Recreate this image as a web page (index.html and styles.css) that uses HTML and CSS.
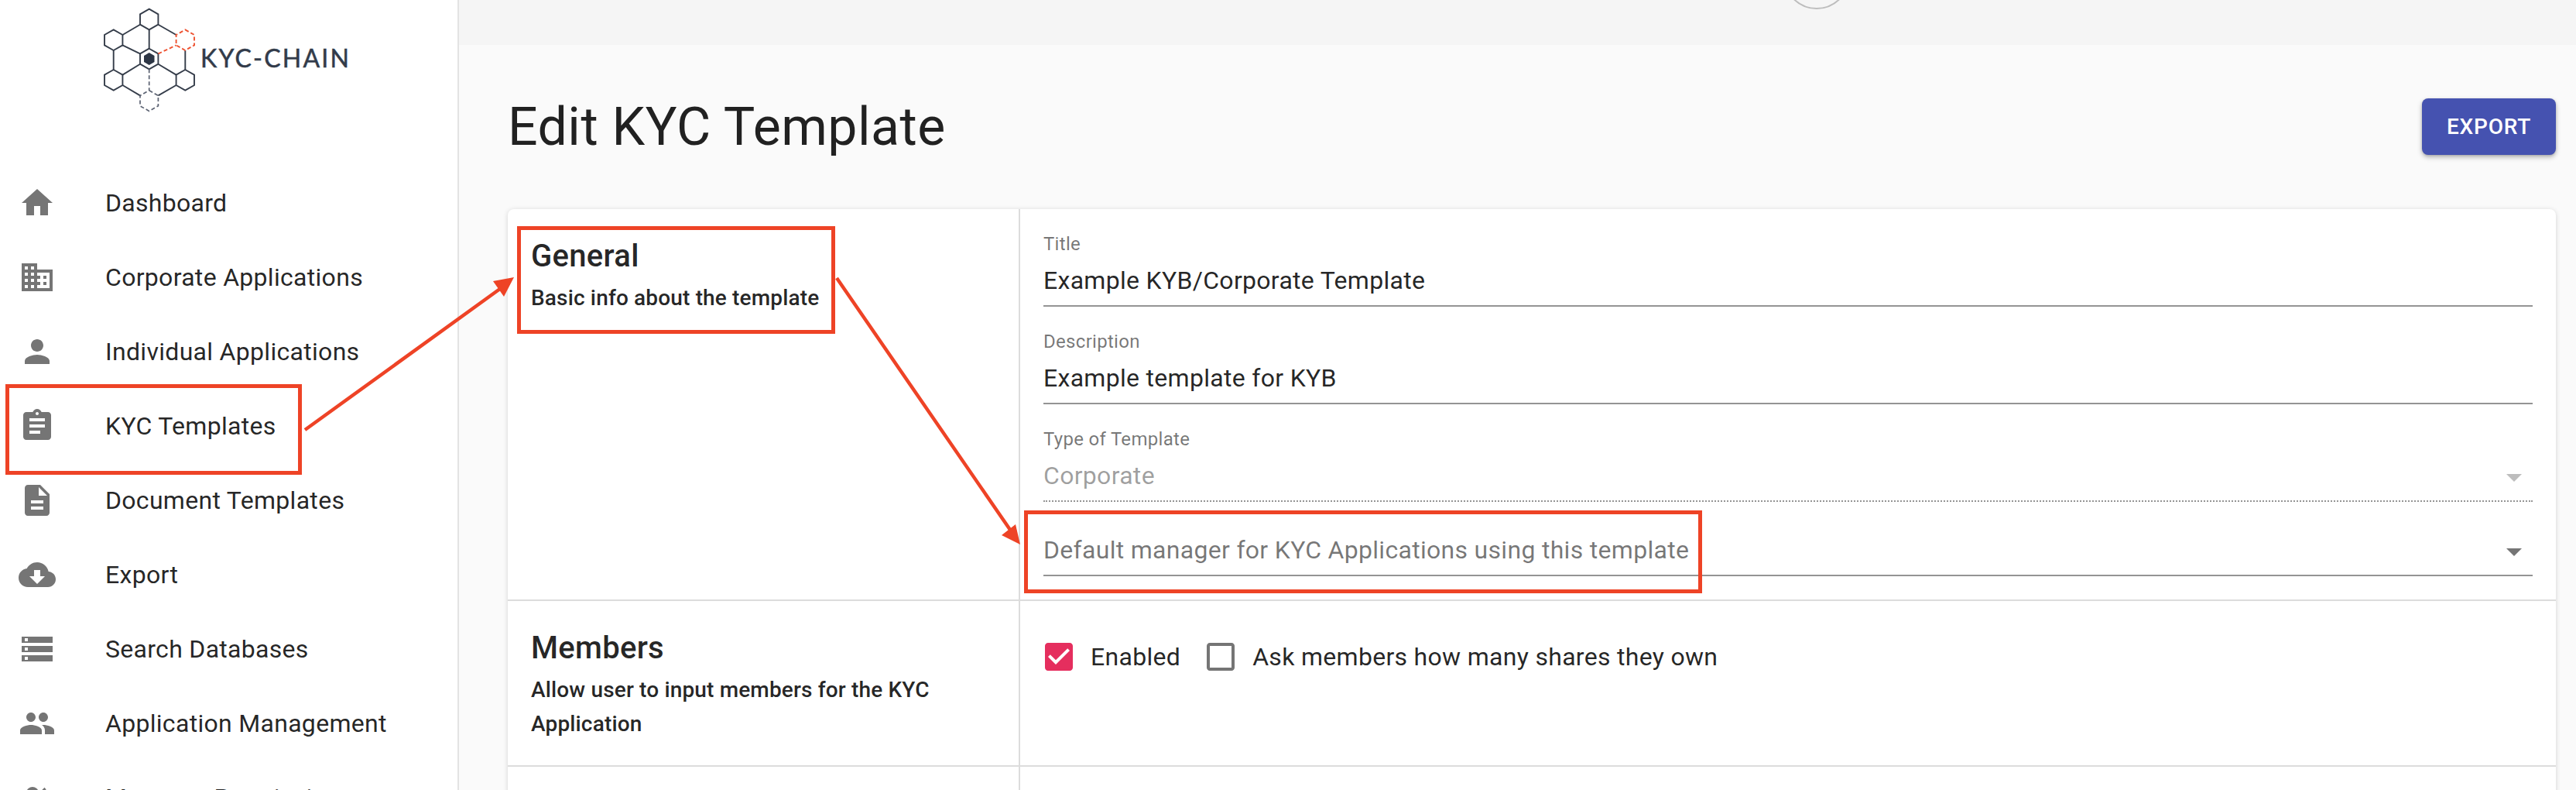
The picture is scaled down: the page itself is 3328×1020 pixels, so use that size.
FILE: index.html
```html
<!DOCTYPE html>
<html lang="en">
<head>
<meta charset="utf-8">
<title>Edit KYC Template</title>
<link rel="stylesheet" href="styles.css">
</head>
<body>
<div class="app">
  <aside class="sidebar">
    <div class="logo">
      <svg class="logo-svg" viewBox="120 0 340 150" width="340" height="150">
        <g class="logo-lines">
          <polygon points="192.7,11.7 204.4,18.3 204.4,31.7 192.7,38.3 181,31.7 181,18.3"/>
          <polygon points="146.7,38.4 158.4,45 158.4,58.4 146.7,65 135,58.4 135,45"/>
          <polygon points="146.7,90 158.4,96.6 158.4,110 146.7,116.6 135,110 135,96.6"/>
          <polygon points="239.3,90 251,96.6 251,110 239.3,116.6 227.6,110 227.6,96.6"/>
          <polygon points="192.7,62.7 204.4,69.4 204.4,82.7 192.7,89.3 181,82.7 181,69.4"/>
          <path d="M204.4 31.7L227.6 45M181 31.7L158.4 45M192.7 38.3V62.7M146.7 65V90M158.4 58.4L181 69.4M239.3 65V90M181 82.7L158.4 96.6M204.4 82.7L227.6 96.6M158.4 110L181 123.4M227.6 110L204.4 123.4"/>
        </g>
        <polygon class="logo-core" points="192.7,68 199.5,72 199.5,80 192.7,84 186,80 186,72"/>
        <g class="logo-red">
          <polygon points="239.3,38.4 251,45 251,58.4 239.3,65 227.6,58.4 227.6,45"/>
          <path d="M204.4 69.4L227.6 58.4"/>
        </g>
        <g class="logo-gray">
          <polygon points="192.7,116.7 204.4,123.4 204.4,136.8 192.7,143.4 181,136.8 181,123.4"/>
          <path d="M192.7 89.3V116.7"/>
        </g>
        <text class="logo-text" x="259" y="87" textLength="192" lengthAdjust="spacing">KYC-CHAIN</text>
      </svg>
    </div>
    <nav class="nav">
      <a class="nav-item"><svg class="icon" viewBox="0 0 24 24"><path d="M10 20v-6h4v6h5v-8h3L12 3 2 12h3v8z"/></svg><span>Dashboard</span></a>
      <a class="nav-item"><svg class="icon" viewBox="0 0 24 24"><path d="M12 7V3H2v18h20V7H12zM6 19H4v-2h2v2zm0-4H4v-2h2v2zm0-4H4V9h2v2zm0-4H4V5h2v2zm4 12H8v-2h2v2zm0-4H8v-2h2v2zm0-4H8V9h2v2zm0-4H8V5h2v2zm10 12h-8v-2h2v-2h-2v-2h2v-2h-2V9h8v10zm-2-8h-2v2h2v-2zm0 4h-2v2h2v-2z"/></svg><span>Corporate Applications</span></a>
      <a class="nav-item"><svg class="icon" viewBox="0 0 24 24"><path d="M12 12c2.21 0 4-1.79 4-4s-1.79-4-4-4-4 1.79-4 4 1.79 4 4 4zm0 2c-2.67 0-8 1.34-8 4v2h16v-2c0-2.66-5.33-4-8-4z"/></svg><span>Individual Applications</span></a>
      <a class="nav-item"><svg class="icon" viewBox="0 0 24 24"><path d="M19 3h-4.18C14.4 1.84 13.3 1 12 1c-1.3 0-2.4.84-2.82 2H5c-1.1 0-2 .9-2 2v14c0 1.1.9 2 2 2h14c1.1 0 2-.9 2-2V5c0-1.1-.9-2-2-2zm-7 0c.55 0 1 .45 1 1s-.45 1-1 1-1-.45-1-1 .45-1 1-1zm2 14H7v-2h7v2zm3-4H7v-2h10v2zm0-4H7V7h10v2z"/></svg><span>KYC Templates</span></a>
      <a class="nav-item"><svg class="icon" viewBox="0 0 24 24"><path d="M14 2H6c-1.1 0-1.99.9-1.99 2L4 20c0 1.1.89 2 1.99 2H18c1.1 0 2-.9 2-2V8l-6-6zm2 16H8v-2h8v2zm0-4H8v-2h8v2zm-3-5V3.5L18.5 9H13z"/></svg><span>Document Templates</span></a>
      <a class="nav-item"><svg class="icon" viewBox="0 0 24 24"><path d="M19.35 10.04C18.67 6.59 15.64 4 12 4 9.11 4 6.6 5.64 5.35 8.04 2.34 8.36 0 10.91 0 14c0 3.31 2.69 6 6 6h13c2.76 0 5-2.24 5-5 0-2.64-2.05-4.78-4.65-4.96zM17 13l-5 5-5-5h3V9h4v4h3z"/></svg><span>Export</span></a>
      <a class="nav-item"><svg class="icon" viewBox="0 0 24 24"><path d="M2 20h20v-4H2v4zm2-3h2v2H4v-2zM2 4v4h20V4H2zm4 3H4V5h2v2zm-4 7h20v-4H2v4zm2-3h2v2H4v-2z"/></svg><span>Search Databases</span></a>
      <a class="nav-item"><svg class="icon" viewBox="0 0 24 24"><path d="M16 11c1.66 0 2.99-1.34 2.99-3S17.66 5 16 5c-1.66 0-3 1.34-3 3s1.34 3 3 3zm-8 0c1.66 0 2.99-1.34 2.99-3S9.66 5 8 5C6.34 5 5 6.34 5 8s1.34 3 3 3zm0 2c-2.33 0-7 1.17-7 3.5V19h14v-2.5c0-2.33-4.67-3.5-7-3.5zm8 0c-.29 0-.62.02-.97.05 1.16.84 1.97 1.97 1.97 3.45V19h6v-2.5c0-2.33-4.67-3.5-7-3.5z"/></svg><span>Application Management</span></a>
      <a class="nav-item"><svg class="icon" viewBox="0 0 24 24"><path d="M5 9a4 4 0 1 0 8 0a4 4 0 1 0-8 0zM9 15c-2.67 0-8 1.34-8 4v2h16v-2c0-2.66-5.33-4-8-4zm7.76-9.64l-1.68 1.69c.84 1.18.84 2.71 0 3.89l1.68 1.69c2.02-2.02 2.02-5.07 0-7.27z"/></svg><span>Message Permissions</span></a>
    </nav>
  </aside>
  <main class="main">
    <div class="topbar"><div class="avatar"></div></div>
    <div class="content">
      <header class="page-head">
        <h1 class="page-title">Edit KYC Template</h1>
        <button class="btn-export">EXPORT</button>
      </header>
      <section class="card">
        <div class="row">
          <div class="row-info">
            <h2 class="row-title">General</h2>
            <p class="row-desc">Basic info about the template</p>
          </div>
          <div class="row-body fields">
            <div class="field">
              <label class="field-label">Title</label>
              <div class="field-value">Example KYB/Corporate Template</div>
            </div>
            <div class="field">
              <label class="field-label">Description</label>
              <div class="field-value">Example template for KYB</div>
            </div>
            <div class="field">
              <label class="field-label">Type of Template</label>
              <div class="field-value is-disabled">Corporate
                <svg class="arrow arrow-disabled" viewBox="0 0 24 24"><path d="M7 10l5 5 5-5z"/></svg>
              </div>
            </div>
            <div class="field field-nolabel">
              <div class="field-value is-placeholder">Default manager for KYC Applications using this template
                <svg class="arrow" viewBox="0 0 24 24"><path d="M7 10l5 5 5-5z"/></svg>
              </div>
            </div>
          </div>
        </div>
        <div class="row">
          <div class="row-info">
            <h2 class="row-title">Members</h2>
            <p class="row-desc">Allow user to input members for the KYC Application</p>
          </div>
          <div class="row-body checks">
            <label class="check">
              <svg class="check-box is-on" viewBox="0 0 24 24"><path d="M19 3H5c-1.11 0-2 .9-2 2v14c0 1.1.89 2 2 2h14c1.11 0 2-.9 2-2V5c0-1.1-.89-2-2-2zm-9 14l-5-5 1.41-1.41L10 14.17l7.59-7.59L19 8l-9 9z"/></svg>
              <span>Enabled</span>
            </label>
            <label class="check">
              <svg class="check-box" viewBox="0 0 24 24"><path d="M19 5v14H5V5h14m0-2H5c-1.1 0-2 .9-2 2v14c0 1.1.9 2 2 2h14c1.1 0 2-.9 2-2V5c0-1.1-.9-2-2-2z"/></svg>
              <span>Ask members how many shares they own</span>
            </label>
          </div>
        </div>
        <div class="row row-empty">
          <div class="row-info"></div>
          <div class="row-body"></div>
        </div>
      </section>
    </div>
  </main>
</div>
<svg class="annotations" viewBox="0 0 3328 1020" width="3328" height="1020">
  <rect x="9.5" y="498.5" width="378" height="112"/>
  <rect x="670.5" y="294.5" width="406" height="134"/>
  <rect x="1325.5" y="661.5" width="871" height="102"/>
  <path d="M394 555L650 370M1081 359L1305 684"/>
  <polygon class="head" points="664,358 637,363 651,383"/>
  <polygon class="head" points="1318,703 1294,691 1312,677"/>
</svg>
</body>
</html>
```

FILE: styles.css
```css
* { box-sizing: border-box; }
html, body { margin: 0; height: 1020px; overflow: hidden; }
body {
  position: relative;
  background: #fafafa;
  font-family: Roboto, "Liberation Sans", sans-serif;
  color: rgba(0, 0, 0, 0.87);
}
.app { display: flex; height: 1020px; overflow: hidden; }

.sidebar {
  flex: none;
  width: 593px;
  background: #fff;
  border-right: 2px solid #e3e3e3;
}
.logo { height: 214px; padding-left: 120px; }
.logo-svg { display: block; }
.logo-lines { fill: none; stroke: #353d4a; stroke-width: 1.9; }
.logo-core { fill: #2d3645; }
.logo-red { fill: none; stroke: #ee5231; stroke-width: 1.9; stroke-dasharray: 5 3; }
.logo-gray { fill: none; stroke: #5b6272; stroke-width: 1.7; stroke-dasharray: 5 3; }
.logo-text { font-family: Lato, sans-serif; font-size: 32px; fill: #323b4a; stroke: #323b4a; stroke-width: 0.5; }

.nav { display: flex; flex-direction: column; }
.nav-item {
  display: flex;
  align-items: center;
  flex: none;
  height: 96px;
  padding-left: 24px;
  font-size: 32px;
  letter-spacing: 0.3px;
}
.icon { flex: none; width: 48px; height: 48px; margin-right: 64px; fill: #757575; }

.main { flex: 1; min-width: 0; display: flex; flex-direction: column; }
.topbar {
  flex: none;
  height: 58px;
  background: #f5f5f5;
  display: flex;
  justify-content: flex-end;
  align-items: flex-end;
  padding: 0 938px 46px 0;
  overflow: hidden;
}
.avatar {
  flex: none;
  width: 86px;
  height: 86px;
  border-radius: 50%;
  border: 2px solid #bdbdbd;
}
.content { flex: 1; padding: 69px 26px 0 63px; }
.page-head {
  display: flex;
  justify-content: space-between;
  align-items: center;
  height: 73px;
  margin-bottom: 70px;
}
.page-title { margin: 0; font-size: 68px; font-weight: 400; letter-spacing: 0.5px; }
.btn-export {
  width: 173px;
  height: 73px;
  border: 0;
  border-radius: 8px;
  background: #4552b0;
  color: #fff;
  font-family: inherit;
  font-size: 28px;
  font-weight: 500;
  letter-spacing: 0.8px;
  box-shadow: 0 3px 6px rgba(0, 0, 0, 0.28), 0 1px 3px rgba(0, 0, 0, 0.12);
}

.card {
  background: #fff;
  border-radius: 8px 8px 0 0;
  box-shadow: 0 1px 6px rgba(0, 0, 0, 0.16);
}
.row {
  display: grid;
  grid-template-columns: 660px 1fr;
  border-bottom: 2px solid #dcdcdc;
}
.row-empty { height: 100px; border-bottom: 0; }
.row-info { padding: 29px 30px 31px 30px; }
.row-body { border-left: 2px solid #dcdcdc; padding: 0 30px; }
.row-title { margin: 0; font-size: 40px; font-weight: 500; line-height: 64px; letter-spacing: 0.3px; }
.row-desc { margin: 0; font-size: 28px; font-weight: 500; line-height: 44px; letter-spacing: 0.16px; }

.fields { display: flex; flex-direction: column; gap: 31px; padding-top: 31px; padding-bottom: 30px; }
.field-label {
  display: block;
  height: 28px;
  margin-bottom: 3px;
  font-size: 24px;
  line-height: 28px;
  letter-spacing: 0.3px;
  color: rgba(0, 0, 0, 0.54);
}
.field-value {
  display: flex;
  justify-content: space-between;
  align-items: flex-start;
  height: 64px;
  font-size: 32px;
  line-height: 60px;
  letter-spacing: 0.3px;
  border-bottom: 2px solid rgba(0, 0, 0, 0.42);
}
.field-nolabel { padding-top: 1px; }
.is-disabled { color: rgba(0, 0, 0, 0.38); border-bottom-style: dotted; }
.is-placeholder { color: rgba(0, 0, 0, 0.54); }
.arrow { flex: none; width: 48px; height: 48px; margin-top: 8px; fill: #757575; }
.arrow-disabled { fill: #bdbdbd; }

.checks { display: flex; align-items: flex-start; gap: 28px; padding-top: 48px; padding-left: 26px; }
.check { display: flex; align-items: center; gap: 17px; font-size: 32px; letter-spacing: 0.3px; }
.check-box { flex: none; width: 48px; height: 48px; fill: #757575; }
.check-box.is-on { fill: #e52e5e; }

.annotations { position: absolute; top: 0; left: 0; pointer-events: none; }
.annotations rect, .annotations path { fill: none; stroke: #ee4326; stroke-width: 5; }
.annotations path { stroke-width: 4.5; }
.annotations .head { fill: #ee4326; }
```
